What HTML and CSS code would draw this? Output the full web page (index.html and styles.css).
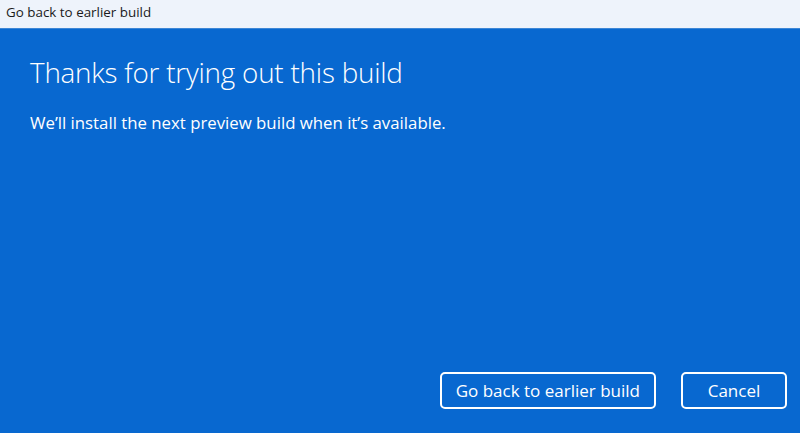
FILE: index.html
```html
<!DOCTYPE html>
<html>
    <head>
        <meta charset="utf-8">
        <title>Go back to earlier build</title>
        <link rel="stylesheet" href="styles.css">
    </head>
    <body>
        <div class="titlebar">Go back to earlier build</div>

        <div class="panel">
            <div class="content">
                <h1>Thanks for trying out this build</h1>
                <p>We’ll install the next preview build when it’s available.</p>
            </div>

            <div class="actions">
                <button class="btn btn-wide">Go back to earlier build</button>
                <button class="btn">Cancel</button>
            </div>
        </div>
    </body>
</html>
```
FILE: styles.css
```css
html, body {
    margin: 0;
    height: 100%;
}

body {
    display: flex;
    flex-direction: column;
    font-family: "Open Sans", "Noto Sans", sans-serif;
    background: #0868d0;
}

.titlebar {
    height: 28px;
    line-height: 24px;
    padding-left: 6px;
    font-size: 13.4px;
    color: #1a1a1a;
    background: #eef3fb;
    border-bottom: 1px solid #3d86d6;
}

.panel {
    flex: 1;
    display: flex;
    flex-direction: column;
    justify-content: space-between;
    padding: 24px 13px 24px 30px;
    color: #ffffff;
}

h1 {
    margin: 0;
    font-size: 27.8px;
    font-weight: 300;
    letter-spacing: -0.2px;
}

p {
    margin: 20px 0 0 0;
    font-size: 16.8px;
}

.actions {
    display: flex;
    justify-content: flex-end;
    gap: 25px;
}

.btn {
    height: 37px;
    min-width: 106px;
    padding: 0 14px;
    font-family: inherit;
    font-size: 17px;
    color: #ffffff;
    background: transparent;
    border: 2px solid #ffffff;
    border-radius: 5px;
}
```
